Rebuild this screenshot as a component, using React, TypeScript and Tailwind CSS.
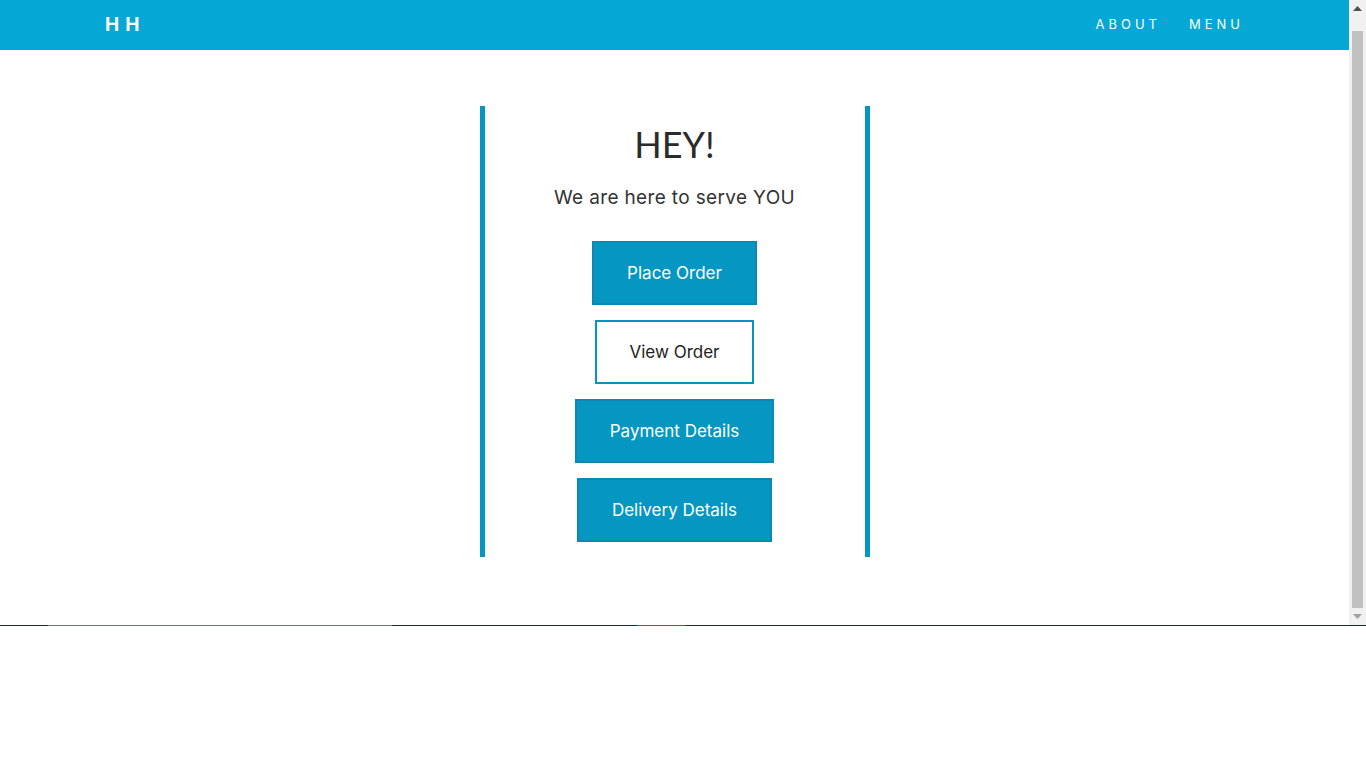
import React from "react";

const btnFilled =
  "h-16 px-[33px] border-2 border-[#0a8ab3] bg-[#0597c1] text-white flex items-center justify-center text-[17px] leading-[20px]";
const btnOutline =
  "h-16 px-[33px] border-2 border-[#0792c0] bg-white text-[#222] flex items-center justify-center text-[17px] leading-[20px]";

export default function App() {
  return (
    <div className="w-[1366px] bg-white" style={{ fontFamily: "Inter, 'Open Sans', sans-serif" }}>
      <div className="flex h-[625px]">
        <div className="flex-1 flex flex-col">
          <header className="h-[50px] bg-[#05a7d5] flex items-center justify-between pl-[105px] pr-[105px]">
            <div className="text-white font-bold text-[19px] tracking-[6px]">HH</div>
            <nav className="flex gap-[28px] text-white text-[13px] tracking-[4px]">
              <span>ABOUT</span>
              <span>MENU</span>
            </nav>
          </header>
          <main className="flex justify-center pt-[56px]">
            <div className="w-[390px] border-x-[5px] border-[#0597c1] flex flex-col items-center pt-[17px] pb-[15px]">
              <h1
                className="text-[36px] leading-[43px] text-[#2b2b2b]"
                style={{ fontFamily: "Lato, sans-serif" }}
              >
                HEY!
              </h1>
              <p className="mt-[18px] text-[19px] leading-[28px] tracking-[0.35px] text-[#333]">We are here to serve YOU</p>
              <div className="mt-[29px] flex flex-col items-center gap-[15px]">
                <button className={btnFilled}>Place Order</button>
                <button className={btnOutline}>View Order</button>
                <button className={btnFilled}>Payment Details</button>
                <button className={btnFilled}>Delivery Details</button>
              </div>
            </div>
          </main>
        </div>
        <div className="w-[17px] bg-[#f1f1f1] flex flex-col items-center">
          <div className="h-[17px] flex items-center justify-center">
            <svg width="9" height="5" viewBox="0 0 9 5"><path d="M0 5 L4.5 0 L9 5 Z" fill="#505050" /></svg>
          </div>
          <div className="mt-[14px] w-[11px] h-[577px] bg-[#c1c1c1]" />
          <div className="mt-auto h-[17px] flex items-center justify-center">
            <svg width="9" height="5" viewBox="0 0 9 5"><path d="M0 0 L9 0 L4.5 5 Z" fill="#a3a3a3" /></svg>
          </div>
        </div>
      </div>
      <div className="flex h-px">
        <div className="w-[48px] bg-[#1d2b2b]" />
        <div className="w-[344px] bg-[#6a7878]" />
        <div className="w-[245px] bg-[#1d2b2b]" />
        <div className="w-[49px] bg-[#25707f]" />
        <div className="flex-1 bg-[#1d2b2b]" />
      </div>
      <div className="h-[142px] bg-white" />
    </div>
  );
}
